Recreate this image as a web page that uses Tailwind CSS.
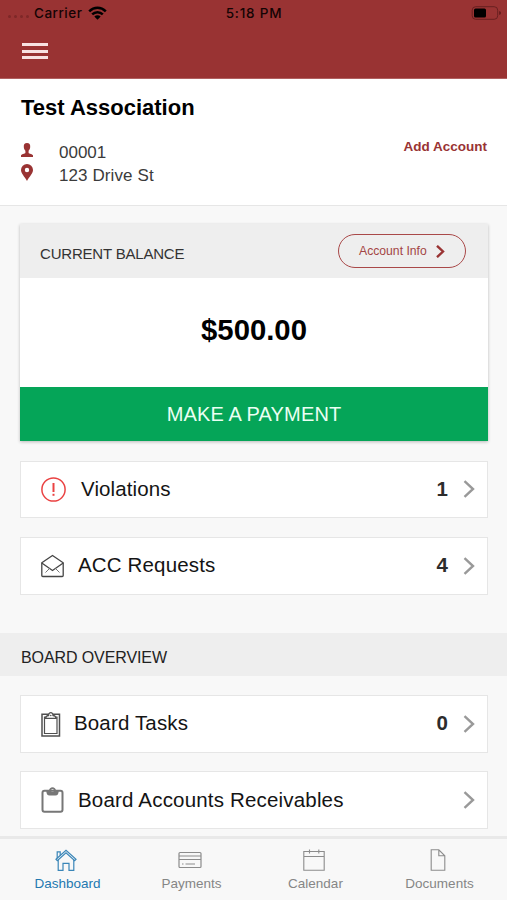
<!DOCTYPE html>
<html lang="en">
<head>
<meta charset="utf-8">
<title>Dashboard</title>
<script src="https://cdn.jsdelivr.net/npm/@tailwindcss/browser@4"></script>
</head>
<body class="w-[507px] h-[900px] overflow-hidden bg-[#f8f8f8] font-['Liberation_Sans',Arial,sans-serif] text-[#141414]">
<div class="flex flex-col h-[900px]">
  <header class="h-[79px] shrink-0 bg-[#993333] border-b border-[#b06060]">
    <div class="h-[26px] grid grid-cols-3 items-center pl-2 pr-[5px] font-[Inter,sans-serif] font-medium text-[13.5px] text-[#140404]">
      <div class="flex items-center">
        <div class="flex gap-[3px] w-[26px] pt-[7px]">
          <i class="size-[3px] rounded-full bg-[#7e2828]"></i><i class="size-[3px] rounded-full bg-[#7e2828]"></i><i class="size-[3px] rounded-full bg-[#7e2828]"></i><i class="size-[3px] rounded-full bg-[#7e2828]"></i>
        </div>
        <span class="w-[54px] tracking-[0.5px]">Carrier</span>
        <svg class="w-[19px] h-[14px]" viewBox="0 0 19 14"><g fill="none" stroke="#000" stroke-width="2.5"><path d="M1.2 5.3C6 .5 13 .5 17.8 5.3"/><path d="M4.2 8.4c3-3 7.600-3 10.600 0"/></g><path d="M6.300 10.500c1.900-1.700 4.500-1.700 6.400 0L9.500 13.700z"/></svg>
      </div>
      <div class="text-center tracking-[0.8px] pr-0.5">5:18 PM</div>
      <svg class="w-[31px] h-[14px] justify-self-end" viewBox="0 0 31 14"><rect x="1.200" y=".7" width="25.500" height="12.600" rx="3.500" fill="none" stroke="#682020"/><rect x="3" y="2.500" width="12" height="9" rx="1.500"/><path d="M28.300 5v4c2-.8 2-3.200 0-4z" fill="#551515"/></svg>
    </div>
    <div class="pl-[22px] pt-[17px] flex flex-col gap-[3.500px]">
      <i class="w-[26px] h-[3px] bg-[#f8e2e2]"></i><i class="w-[26px] h-[3px] bg-[#f8e2e2]"></i><i class="w-[26px] h-[3px] bg-[#f8e2e2]"></i>
    </div>
  </header>

  <section class="h-[127px] shrink-0 bg-white border-b border-[#e6e6e6] pl-[21px] pr-[19px] pt-4">
    <h1 class="font-bold text-[22px] leading-[26px] text-black">Test Association</h1>
    <div class="flex justify-between pt-[19px]">
      <div class="text-[17px] leading-[23px] text-[#3b3b3b] pt-px">
        <div class="flex items-center">
          <svg class="w-[12px] h-[14px] mr-[26px] -mt-1.5" viewBox="0 0 12 14" fill="#993333"><path d="M6 0c2.400 0 3.400 1.600 3.200 4-.1 1.800-.8 2.900-1.600 3.800v2.100c.3.900 4.400 1.100 4.400 2.600V14H0v-1.500c0-1.500 4.100-1.700 4.400-2.600V7.800C3.600 6.900 2.900 5.800 2.800 4 2.600 1.600 3.600 0 6 0z"/></svg>
          <span>00001</span>
        </div>
        <div class="flex items-center">
          <svg class="w-[12px] h-[17px] mr-[26px] -mt-1.5" viewBox="0 0 12 17" fill="#993333"><path fill-rule="evenodd" d="M6 0a6 6 0 0 1 6 6c0 3.400-3.500 6.500-6 11C3.500 12.500 0 9.400 0 6a6 6 0 0 1 6-6zm0 3.800a2.200 2.200 0 1 0 0 4.400 2.200 2.200 0 0 0 0-4.400z"/></svg>
          <span class="tracking-[0.100px]">123 Drive St</span>
        </div>
      </div>
      <a class="font-bold text-[13.500px] leading-[14px] text-[#993333] pr-px">Add Account</a>
    </div>
  </section>

  <main class="flex-1 min-h-0 overflow-hidden">
    <section class="mx-5 mt-[18px] w-[468px] h-[217px] bg-white flex flex-col shadow-[0_1px_3px_rgba(0,0,0,0.25)]">
      <div class="h-[54px] bg-[#eeeeee] flex items-center justify-between pl-5 pr-[22px]">
        <h2 class="text-[15px] tracking-[-0.200px] text-[#333] pt-1.5">CURRENT BALANCE</h2>
        <a class="w-[128px] h-[34px] rounded-full border-[1.500px] border-[#a94848] text-[#a34545] text-[12.200px] flex items-center pl-5">
          <span class="w-[77px]">Account Info</span>
          <svg class="w-[9px] h-[13px]" viewBox="0 0 9 13" fill="none" stroke="#993333" stroke-width="2.400"><path d="M1 .8l6 5.700-6 5.700"/></svg>
        </a>
      </div>
      <div class="flex-1 flex items-center justify-center font-bold text-[29.300px] text-black pb-[5px]">$500.00</div>
      <a class="h-[54px] bg-[#05a558] text-[#eafff3] text-[20px] tracking-[0.150px] flex items-center justify-center">MAKE A PAYMENT</a>
    </section>

    <a class="mx-5 mt-5 w-[468px] h-[57px] bg-white border border-[#e6e6e6] flex items-center pl-5 pr-3 text-[20.500px]">
      <svg class="w-[25px] h-[25px] mr-[15px]" viewBox="0 0 25 25" fill="none" stroke="#ea4242"><circle cx="12.500" cy="12.500" r="11.600" stroke-width="1.500"/><path d="M12.500 6v9" stroke-width="2"/><path d="M12.500 16.800v2" stroke-width="2"/></svg>
      <span class="flex-1 tracking-[0.100px] pb-px">Violations</span>
      <b class="text-[#2c2c2c] mr-[15px] pb-px">1</b>
      <svg class="w-[12px] h-[18px] -mt-px" viewBox="0 0 12 18" fill="none" stroke="#999" stroke-width="2.400"><path d="M1.500 1.200L10 9l-8.500 7.800"/></svg>
    </a>
    <a class="mx-5 mt-[19px] w-[468px] h-[58px] bg-white border border-[#e6e6e6] flex items-center pl-5 pr-3 text-[20.500px]">
      <svg class="w-[23px] h-[24px] mr-[14px]" viewBox="0 0 23 24" fill="none" stroke="#454545" stroke-width="1.300"><path d="M.8 8.800L11.500 1.500l10.700 7.300v12.700q0 1-1 1H1.800q-1 0-1-1z"/><path d="M.8 9l10.700 7.500L22.200 9"/><path d="M4.500 18.500l4-4M18.500 18.500l-4-4" stroke="#777" stroke-width="1"/></svg>
      <span class="flex-1 tracking-[0.150px] pb-0.5">ACC Requests</span>
      <b class="text-[#2c2c2c] mr-[15px] pb-0.5">4</b>
      <svg class="w-[12px] h-[18px]" viewBox="0 0 12 18" fill="none" stroke="#999" stroke-width="2.400"><path d="M1.500 1.200L10 9l-8.500 7.800"/></svg>
    </a>

    <h2 class="mt-[38px] h-[43px] bg-[#eeeeee] pl-[21px] pt-1.5 flex items-center text-[16px] tracking-[-0.100px] text-[#222]">BOARD OVERVIEW</h2>

    <a class="mx-5 mt-[19px] w-[468px] h-[58px] bg-white border border-[#e6e6e6] flex items-center pl-5 pr-3 text-[20.500px]">
      <svg class="w-[20px] h-[25px] mr-[13px]" viewBox="0 0 20 25" fill="none" stroke="#505050"><path d="M1 2.300h17.500v21.700H1z" stroke-width="1.500"/><path d="M3.500 5h12.500v16.500H3.500z" stroke-width="1.200"/><path d="M4.500 6.300Q5 3.600 7.600 3.500C7.400-.3 12.200-.3 12 3.500Q14.600 3.600 15.200 6.300z" fill="#fff" stroke-width="1.300"/><circle cx="9.800" cy="3.500" r=".8" fill="#505050" stroke="none"/></svg>
      <span class="flex-1 tracking-[0.150px] pb-px">Board Tasks</span>
      <b class="text-[#2c2c2c] mr-[15px] pb-px">0</b>
      <svg class="w-[12px] h-[18px]" viewBox="0 0 12 18" fill="none" stroke="#999" stroke-width="2.400"><path d="M1.500 1.200L10 9l-8.500 7.800"/></svg>
    </a>
    <a class="mx-5 mt-[18px] w-[468px] h-[58px] bg-white border border-[#e6e6e6] flex items-center pl-5 pr-3 text-[20.500px]">
      <svg class="w-[23px] h-[26px] mr-[14px]" viewBox="0 0 23 26" fill="none" stroke="#777"><rect x="1.500" y="3.800" width="20" height="21" rx="2" stroke-width="2"/><path fill="#777" stroke="none" fill-rule="evenodd" d="M5.300 4H8C8-.9 15-.9 15 4h2.700Q17.500 8.500 14.500 8.500h-6Q5.500 8.500 5.300 4zM11.500 2a1.500 1.500 0 1 0 0 3 1.500 1.500 0 0 0 0-3z"/></svg>
      <span class="flex-1 tracking-[0.180px]">Board Accounts Receivables</span>
      <svg class="w-[12px] h-[18px]" viewBox="0 0 12 18" fill="none" stroke="#999" stroke-width="2.400"><path d="M1.500 1.200L10 9l-8.500 7.800"/></svg>
    </a>
  </main>

  <nav class="h-[64px] shrink-0 border-t-[3px] border-[#e9e9e9] bg-[#f8f8f8] grid grid-cols-4 px-[5.500px] text-[13.500px] leading-4 text-[#868686]">
    <a class="flex flex-col items-center text-[#2478b0]">
      <svg class="w-[22px] h-[22px] mt-[10px] mb-[5px] -ml-1" viewBox="0 0 22 22" fill="none" stroke="#3a86b8" stroke-width="1.200"><path d="M1 10.300L11 1.300l10 9-1.300 1.300L11 3.900l-8.700 7.700z"/><path d="M3.200 10.800v10.500h4.800v-7h6v7h4.800V10.800M2.200 9.200V2.800h3v3.700"/></svg>
      <span>Dashboard</span>
    </a>
    <a class="flex flex-col items-center">
      <svg class="w-[24px] h-[22px] mt-[10px] mb-[5px] -ml-1" viewBox="0 0 24 22" fill="none" stroke="#8c8c8c"><rect x="1" y="3.500" width="22" height="15" rx="1" stroke-width="1.200"/><path d="M1 7h22M1 10.500h22" stroke-width="1.200"/><path d="M4 15h1.500M7.500 15H17" stroke-width="1"/></svg>
      <span>Payments</span>
    </a>
    <a class="flex flex-col items-center">
      <svg class="w-[22px] h-[22px] mt-[10px] mb-[5px] -ml-1" viewBox="0 0 22 22" fill="none" stroke="#8c8c8c" stroke-width="1.100"><path d="M.8 2.500h20.400v18.700H.8zM.8 7.500h20.400M6.500 .5v4M15.800 .5v4"/></svg>
      <span>Calendar</span>
    </a>
    <a class="flex flex-col items-center">
      <svg class="w-[16px] h-[22px] mt-[10px] mb-[5px] -ml-1" viewBox="0 0 16 22" fill="none" stroke="#8c8c8c" stroke-width="1.100"><path d="M1.200 .8h7.600l6 6v14.500H1.200zM8.800 .8v6h6"/></svg>
      <span>Documents</span>
    </a>
  </nav>
</div>
</body>
</html>
